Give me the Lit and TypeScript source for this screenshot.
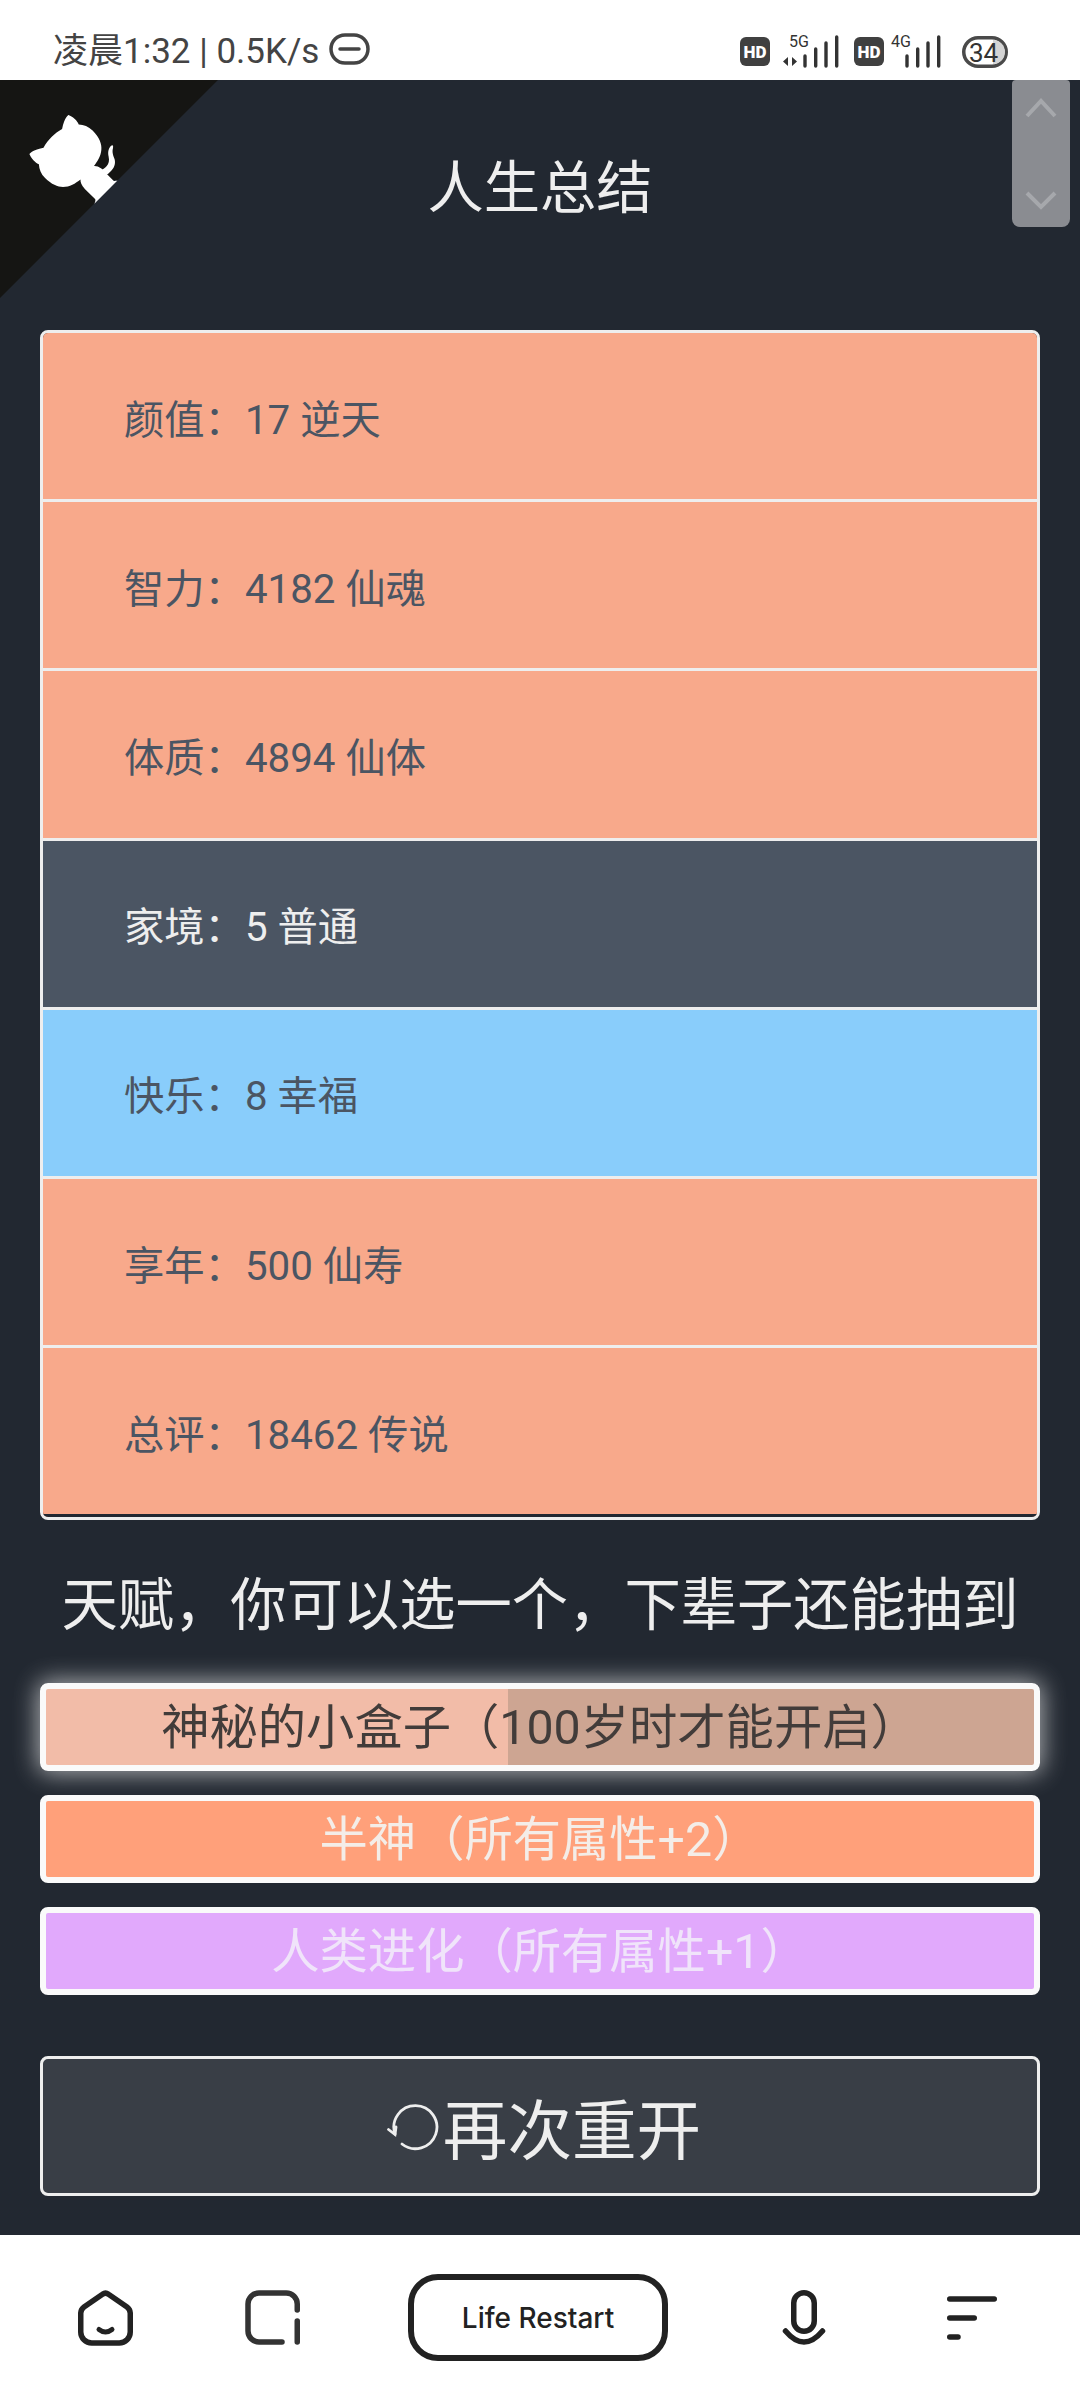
import { LitElement, css, html, svg } from 'lit';
import { customElement } from 'lit/decorators.js';

const rows = [
  { label: '颜值：17 逆天', tone: 'orange' },
  { label: '智力：4182 仙魂', tone: 'orange' },
  { label: '体质：4894 仙体', tone: 'orange' },
  { label: '家境：5 普通', tone: 'slate' },
  { label: '快乐：8 幸福', tone: 'blue' },
  { label: '享年：500 仙寿', tone: 'orange' },
  { label: '总评：18462 传说', tone: 'orange' },
];

const signalBars = (xs: number[]) => {
  const tops = [56, 49, 43, 37];
  return xs.map((x, i) => svg`<line x1=${x} x2=${x} y1=${tops[i]} y2="66" />`);
};

@customElement('app-root')
export class AppRoot extends LitElement {
  static styles = css`
    :host {
      display: block;
      position: relative;
      width: 1080px;
      height: 2400px;
      overflow: hidden;
      background: #222831;
      font-family: Roboto, "Noto Sans CJK SC", sans-serif;
      color: #eeeeee;
    }

    .status {
      height: 80px;
      background: #fff;
      display: flex;
      justify-content: space-between;
      align-items: flex-start;
    }
    .clock {
      display: flex;
      align-items: flex-start;
      gap: 10px;
      padding: 32px 0 0 53px;
      font-size: 35px;
      line-height: 40px;
      color: #444;
    }
    .pill-icon { margin-top: 1px; display: block; }
    .signals { display: block; margin-right: 50px; }

    .corner {
      position: absolute;
      left: 0;
      top: 80px;
      width: 218px;
      height: 218px;
      transform: scaleX(-1);
    }

    .scroller {
      position: absolute;
      left: 1012px;
      top: 80px;
      width: 58px;
      height: 147px;
      background: #8a8c91;
      border-radius: 4px 4px 8px 8px;
    }
    .scroller svg { display: block; }

    h1 {
      margin: 67px 0 99px;
      text-align: center;
      font-size: 56.3px;
      line-height: 84px;
      font-weight: 400;
    }

    .stats {
      list-style: none;
      margin: 0 40px;
      padding: 0;
      border: 3px solid #eeeeee;
      border-radius: 8px;
      overflow: hidden;
    }
    .stats li {
      height: 166.2px;
      display: flex;
      align-items: center;
      padding-left: 81px;
      border-bottom: 3px solid #eeeeee;
      font-size: 40.3px;
      color: #4b5563;
    }
    .stats li:last-child { border-bottom-color: #222831; }
    .orange { background: #f8a98b; }
    .stats .slate { background: #4b5563; color: #eeeeee; }
    .blue { background: #89cdfb; }

    h2 {
      margin: 44px 0 35px;
      text-align: center;
      font-size: 56.3px;
      line-height: 84px;
      font-weight: 400;
    }

    .talents {
      display: flex;
      flex-direction: column;
      gap: 24px;
      margin: 0 40px;
    }
    .talent {
      height: 88px;
      box-sizing: border-box;
      border: 6px solid #fafafa;
      border-radius: 8px;
      display: flex;
      align-items: center;
      justify-content: center;
      font-size: 48.3px;
      padding-bottom: 9px;
    }
    .talent.locked {
      color: #423c3a;
      background: linear-gradient(90deg, #f2bca8 0 462px, #cda592 462px);
      box-shadow: 0 0 24px 2px rgba(238, 238, 238, 0.7);
    }
    .talent.legend { background: #ffa07a; color: #f4ede8; }
    .talent.epic { background: #e1a9fc; color: #f0e4fa; }

    .again {
      height: 140px;
      box-sizing: border-box;
      margin: 61px 40px 0;
      border: 3px solid #eeeeee;
      border-radius: 8px;
      background: #393e46;
      display: flex;
      align-items: center;
      justify-content: center;
      font-size: 64.6px;
      color: #eeeeee;
    }
    .again svg { display: block; margin-left: 8px; }

    .nav {
      position: absolute;
      left: 0;
      right: 0;
      bottom: 0;
      height: 165px;
      background: #fff;
      box-sizing: border-box;
      padding-left: 78px;
      display: grid;
      grid-template-columns: 167px 163px 374px 165px 50px;
      align-items: center;
      justify-items: start;
    }
    .nav svg { display: block; }
    .pill {
      box-sizing: border-box;
      width: 260px;
      height: 87px;
      border: 6px solid #222;
      border-radius: 30px;
      display: flex;
      align-items: center;
      justify-content: center;
      font-family: Inter, Roboto, sans-serif;
      font-weight: 500;
      font-size: 28px;
      color: #222;
    }
  `;

  private renderSignals() {
    return html`
      <svg class="signals" width="300" height="80" viewBox="730 0 300 80">
        <g fill="#404040">
          <rect x="740" y="37" width="30" height="29" rx="6" />
          <rect x="854" y="37" width="30" height="29" rx="6" />
        </g>
        <g fill="#fff" font-family="Roboto, sans-serif" font-weight="900" font-size="17" text-anchor="middle">
          <text x="755" y="58">HD</text>
          <text x="869" y="58">HD</text>
        </g>
        <g fill="#333" font-family="Roboto, sans-serif" font-size="16" text-anchor="middle">
          <text x="799" y="47">5G</text>
          <text x="901" y="47">4G</text>
        </g>
        <path d="M783 61.500l5-4.500v9zM792 57l5 4.500-5 4.500z" fill="#333" />
        <g stroke="#333" stroke-width="3.400" stroke-linecap="round">
          ${signalBars([805, 815.700, 826, 836.700])}
          ${signalBars([907, 917.700, 928, 938.700])}
        </g>
        <rect x="963.750" y="37.750" width="42.500" height="28.500" rx="14.250" fill="#fff" stroke="#4a4a4a" stroke-width="3.500" />
        <path d="M993 40h0a12 12 0 0 1 0 24h0z" fill="#d4d4d4" />
        <text x="983.500" y="62" text-anchor="middle" fill="#333" font-family="Roboto, sans-serif" font-size="26">34</text>
      </svg>
    `;
  }

  render() {
    return html`
      <div class="status">
        <div class="clock">
          <span>凌晨1:32 | 0.5K/s</span>
          <svg class="pill-icon" width="41" height="32" viewBox="0 0 41 32">
            <rect x="2" y="2" width="37" height="28" rx="14" fill="none" stroke="#444" stroke-width="3.500" />
            <line x1="11" x2="30" y1="16" y2="16" stroke="#444" stroke-width="3.500" stroke-linecap="round" />
          </svg>
        </div>
        ${this.renderSignals()}
      </div>

      <h1>人生总结</h1>
      <ul class="stats">
        ${rows.map((r) => html`<li class=${r.tone}>${r.label}</li>`)}
      </ul>

      <h2>天赋，你可以选一个，下辈子还能抽到</h2>
      <div class="talents">
        <div class="talent locked">神秘的小盒子（100岁时才能开启）</div>
        <div class="talent legend">半神（所有属性+2）</div>
        <div class="talent epic">人类进化（所有属性+1）</div>
      </div>

      <div class="again">
        <svg width="56" height="52" viewBox="0 0 56 52" fill="none" stroke="#eee" stroke-width="2.800">
          <path d="M15 44A21.500 21.500 0 1 0 8 34" stroke-linecap="round" />
          <path d="M1.500 29.500L8 34.500L9 27" stroke-linecap="round" />
        </svg>
        <span>再次重开</span>
      </div>

      <svg class="corner" viewBox="0 0 250 250">
        <path fill="#151513" d="M0,0 L115,115 L130,115 L142,142 L250,250 L250,0 Z" />
        <path fill="#fff" d="M128.3,109.0 C113.8,99.7 119.0,89.6 119.0,89.6 C122.0,82.7 120.5,78.6 120.5,78.6 C119.2,72.0 123.4,76.3 123.4,76.3 C127.3,80.9 125.5,87.3 125.5,87.3 C122.9,97.6 130.6,101.9 134.4,103.2" />
        <path fill="#fff" d="M115.0,115.0 C114.9,115.1 118.7,116.5 119.8,115.4 L133.7,101.6 C136.9,99.2 139.9,98.4 142.2,98.6 C133.8,88.0 127.5,74.4 143.8,58.0 C148.5,53.4 154.0,51.2 159.7,51.0 C160.3,49.4 163.2,43.6 171.4,40.1 C171.4,40.1 176.1,42.5 178.8,56.2 C183.1,58.6 187.2,61.8 190.9,65.4 C194.5,69.0 197.7,73.2 200.1,77.6 C213.8,80.2 216.3,84.9 216.3,84.9 C212.7,93.1 206.9,96.0 205.4,96.6 C205.1,102.4 203.0,107.8 198.3,112.5 C181.9,128.9 168.3,122.5 157.7,114.1 C157.9,116.9 156.7,120.9 152.7,124.9 L141.0,136.5 C139.8,137.7 141.6,141.9 141.8,141.8 Z" />
      </svg>

      <div class="scroller">
        <svg width="58" height="147" viewBox="0 0 58 147" fill="none" stroke="#a6a8ac" stroke-width="4">
          <path d="M15 36L29 21L43 36" />
          <path d="M15 113L29 127L43 113" />
        </svg>
      </div>

      <nav class="nav">
        <svg width="55" height="56" viewBox="0 0 55 56" fill="none" stroke="#222" stroke-width="5.500" stroke-linejoin="round">
          <path d="M24.500 4.200a5 5 0 0 1 6 0L49 17a8 8 0 0 1 3.250 6V42a11 11 0 0 1-11 11H13.750a11 11 0 0 1-11-11V23a8 8 0 0 1 3.250-6Z" />
          <path d="M21 39.500Q27.500 44.500 34 39.500" stroke-width="5" stroke-linecap="round" />
        </svg>
        <svg width="55" height="55" viewBox="0 0 55 55" fill="none" stroke="#333" stroke-width="5.500" stroke-linecap="round">
          <path d="M52.250 20V14a11 11 0 0 0-11-11H14a11 11 0 0 0-11 11V41a11 11 0 0 0 11 11H37" />
          <line x1="52.250" x2="52.250" y1="31" y2="52" />
        </svg>
        <div class="pill">Life Restart</div>
        <svg width="44" height="55" viewBox="0 0 44 55" fill="none" stroke="#222" stroke-width="5.500" stroke-linecap="round">
          <rect x="11.750" y="2.750" width="20.500" height="38.500" rx="10.250" />
          <path d="M3.500 41Q22 63 40.500 41" />
        </svg>
        <svg width="50" height="44" viewBox="0 0 50 44" stroke="#222" stroke-width="5.500" stroke-linecap="round">
          <line x1="2.750" x2="47.250" y1="3" y2="3" />
          <line x1="2.750" x2="27.250" y1="22" y2="22" />
          <line x1="2.750" x2="11" y1="41" y2="41" />
        </svg>
      </nav>
    `;
  }
}
